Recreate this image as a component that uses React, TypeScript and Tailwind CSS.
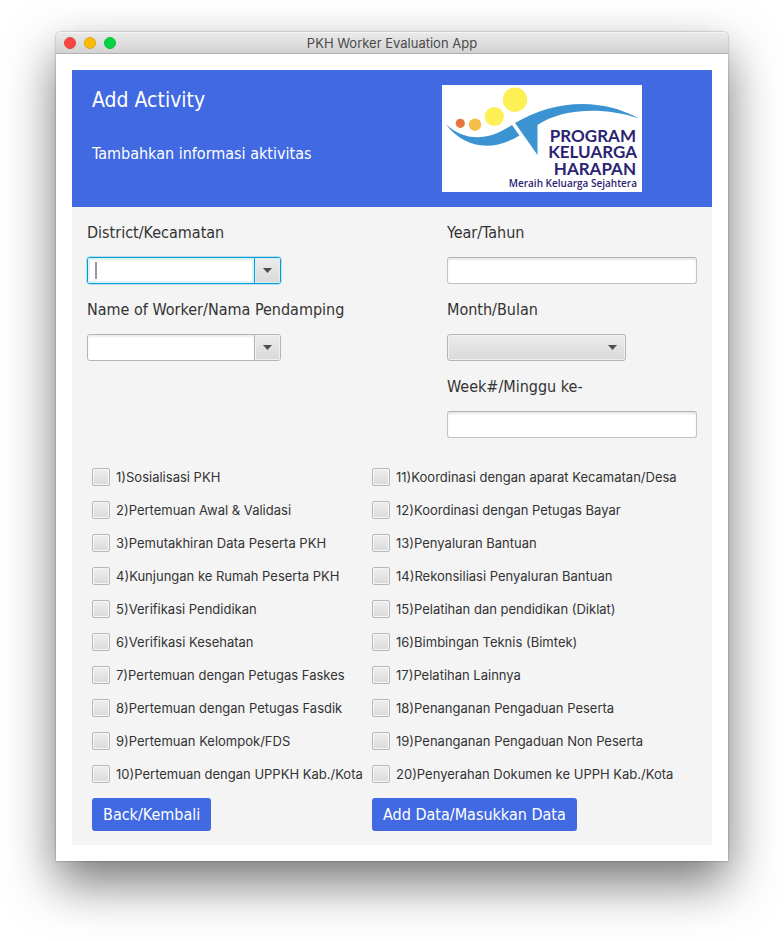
import type { ReactNode } from "react";

const leftActivities = [
  "1)Sosialisasi PKH",
  "2)Pertemuan Awal & Validasi",
  "3)Pemutakhiran Data Peserta PKH",
  "4)Kunjungan ke Rumah Peserta PKH",
  "5)Verifikasi Pendidikan",
  "6)Verifikasi Kesehatan",
  "7)Pertemuan dengan Petugas Faskes",
  "8)Pertemuan dengan Petugas Fasdik",
  "9)Pertemuan Kelompok/FDS",
  "10)Pertemuan dengan UPPKH Kab./Kota",
];

const rightActivities = [
  "11)Koordinasi dengan aparat Kecamatan/Desa",
  "12)Koordinasi dengan Petugas Bayar",
  "13)Penyaluran Bantuan",
  "14)Rekonsiliasi Penyaluran Bantuan",
  "15)Pelatihan dan pendidikan (Diklat)",
  "16)Bimbingan Teknis (Bimtek)",
  "17)Pelatihan Lainnya",
  "18)Penanganan Pengaduan Peserta",
  "19)Penanganan Pengaduan Non Peserta",
  "20)Penyerahan Dokumen ke UPPH Kab./Kota",
];

function Arrow() {
  return (
    <svg width="9" height="5" viewBox="0 0 9 5" aria-hidden="true">
      <path d="M0 0h9L4.500 5z" fill="#4d4d4d" />
    </svg>
  );
}

function Logo() {
  return (
    <svg className="h-[107px] w-[200px] shrink-0 bg-white" viewBox="0 0 200 107" role="img" aria-label="Program Keluarga Harapan">
      <circle cx="18.300" cy="38.300" r="4.600" fill="#e8753f" />
      <circle cx="33" cy="39.700" r="6.200" fill="#f6bd48" />
      <circle cx="52.300" cy="31.500" r="9.600" fill="#fcf055" />
      <circle cx="73" cy="14.700" r="12.200" fill="#fcf055" />
      <path d="M3.500 39C22 56 45 57 70 40L77.500 50.500C52 66 24 65 3.500 39z" fill="#3c93d2" />
      <path d="M73 38C112 15 158 12 197 33.500C160 21 119 24 95.500 40V70z" fill="#3c93d2" />
      <g fill="#2b2472" fontFamily="Lato, sans-serif" fontWeight="700" fontSize="17" textAnchor="end">
        <text x="194" y="57">PROGRAM</text>
        <text x="195" y="73">KELUARGA</text>
        <text x="194" y="90">HARAPAN</text>
      </g>
      <text x="195" y="102" fill="#2b2472" fontFamily="Open Sans, sans-serif" fontWeight="600" fontSize="10" textAnchor="end">
        Meraih Keluarga Sejahtera
      </text>
    </svg>
  );
}

function Field({ id, label, children }: { id: string; label: string; children: ReactNode }) {
  return (
    <div className="flex flex-col gap-[13px]">
      <label htmlFor={id} className="text-base leading-[22px] whitespace-nowrap">
        {label}
      </label>
      {children}
    </div>
  );
}

function TextField({ id }: { id: string }) {
  return (
    <input
      id={id}
      type="text"
      className="h-[27px] w-full rounded-[3px] border border-[#c1c1c1] border-t-[#b4b4b4] bg-white px-2 text-[13px] shadow-[inset_0_2px_2px_#e8e8e8] outline-none"
    />
  );
}

function ComboBox({ id, active = false }: { id: string; active?: boolean }) {
  return (
    <div
      className={
        active
          ? "relative flex h-[27px] w-[194px] rounded-[3px] border border-[#039ed3] bg-white shadow-[0_0_0_1px_#b9dfed]"
          : "relative flex h-[27px] w-[194px] rounded-[3px] border border-[#b5b5b5] bg-white"
      }
    >
      <input
        id={id}
        type="text"
        className={
          active
            ? "min-w-0 flex-1 rounded-l-[2px] px-2 text-[13px] shadow-[inset_0_0_0_2px_#dff1f8] outline-none"
            : "min-w-0 flex-1 rounded-l-[2px] px-2 text-[13px] shadow-[inset_0_2px_2px_#ececec] outline-none"
        }
      />
      {active && <span className="absolute top-1 left-[7px] h-[17px] w-[2px] bg-[#999999]" />}
      <button
        type="button"
        aria-label="Open list"
        className={
          active
            ? "flex w-[26px] items-center justify-center rounded-r-[2px] border-l border-[#039ed3] bg-linear-to-b from-[#ececec] to-[#d9d9d9] shadow-[inset_0_0_0_1px_#dceef5]"
            : "flex w-[26px] items-center justify-center rounded-r-[2px] border-l border-[#b5b5b5] bg-linear-to-b from-[#ececec] to-[#d9d9d9] shadow-[inset_0_0_0_1px_#f0f0f0]"
        }
      >
        <Arrow />
      </button>
    </div>
  );
}

function ActivityList({ items }: { items: string[] }) {
  return (
    <div className="flex flex-col gap-[15px]">
      {items.map((item) => (
        <label key={item} className="flex h-[18px] items-center gap-1.5 font-[Inter,sans-serif] text-[13px] whitespace-nowrap">
          <input
            type="checkbox"
            className="size-[18px] shrink-0 appearance-none rounded-[2px] border border-[#b8b8b8] bg-linear-to-b from-[#efefef] to-[#dadada] shadow-[inset_0_0_0_1px_#f6f6f6] checked:bg-[#4169e1]"
          />
          <span className="leading-4">{item}</span>
        </label>
      ))}
    </div>
  );
}

function ActionButton({ children }: { children: ReactNode }) {
  return (
    <button type="button" className="h-[33px] rounded-[3px] bg-[#4169e1] px-[11px] text-base whitespace-nowrap text-white">
      {children}
    </button>
  );
}

export default function App() {
  return (
    <div className="min-h-screen overflow-hidden bg-white px-14 pt-8 pb-20 font-['DejaVu_Sans_Condensed','DejaVu_Sans',sans-serif] text-[#333333]">
      <div className="rounded-t-[5px] bg-white shadow-[0_0_2px_rgba(0,0,0,0.45),0_22px_50px_rgba(0,0,0,0.54)]">
        <header className="grid h-[22px] grid-cols-[1fr_auto_1fr] items-center rounded-t-[5px] border-t border-b border-t-[#f6f6f6] border-b-[#b1b1b1] bg-linear-to-b from-[#e9e9e9] to-[#d3d3d3] px-2">
          <div className="flex gap-2">
            <button type="button" aria-label="Close" className="size-3 rounded-full border border-[#e2453f] bg-[#fc4444]" />
            <button type="button" aria-label="Minimize" className="size-3 rounded-full border border-[#e0a318] bg-[#fdbc04]" />
            <button type="button" aria-label="Zoom" className="size-3 rounded-full border border-[#12b83c] bg-[#05d541]" />
          </div>
          <h1 className="font-[Inter,sans-serif] text-[13px] leading-5 text-[#4a4a4a]">PKH Worker Evaluation App</h1>
        </header>
        <main className="p-4">
          <section className="flex justify-between bg-[#4169e1] py-[15px] pr-[70px] pl-5 text-white">
            <div>
              <h2 className="text-[21px] leading-[30px]">Add Activity</h2>
              <p className="mt-[27px] text-base leading-6">Tambahkan informasi aktivitas</p>
            </div>
            <Logo />
          </section>
          <form className="bg-[#f4f4f4] px-[15px] pt-[15px] pb-[14px]">
            <div className="grid grid-cols-[1fr_250px] gap-[15px]">
              <div className="flex flex-col gap-[15px]">
                <Field id="district" label="District/Kecamatan">
                  <ComboBox id="district" active />
                </Field>
                <Field id="worker" label="Name of Worker/Nama Pendamping">
                  <ComboBox id="worker" />
                </Field>
              </div>
              <div className="flex flex-col gap-[15px]">
                <Field id="year" label="Year/Tahun">
                  <TextField id="year" />
                </Field>
                <Field id="month" label="Month/Bulan">
                  <div className="relative w-[179px]">
                    <select
                      id="month"
                      className="block h-[27px] w-full appearance-none rounded-[3px] border border-[#b5b5b5] bg-linear-to-b from-[#ececec] to-[#d9d9d9] px-2 text-[13px] shadow-[inset_0_0_0_1px_#f0f0f0] outline-none"
                    >
                      <option value="" />
                    </select>
                    <span className="pointer-events-none absolute inset-y-0 right-[9px] flex items-center">
                      <Arrow />
                    </span>
                  </div>
                </Field>
                <Field id="week" label="Week#/Minggu ke-">
                  <TextField id="week" />
                </Field>
              </div>
            </div>
            <div className="mt-[30px] grid grid-cols-[1fr_325px] gap-y-[15px] pl-[5px]">
              <ActivityList items={leftActivities} />
              <ActivityList items={rightActivities} />
              <div>
                <ActionButton>Back/Kembali</ActionButton>
              </div>
              <div>
                <ActionButton>Add Data/Masukkan Data</ActionButton>
              </div>
            </div>
          </form>
        </main>
      </div>
    </div>
  );
}
